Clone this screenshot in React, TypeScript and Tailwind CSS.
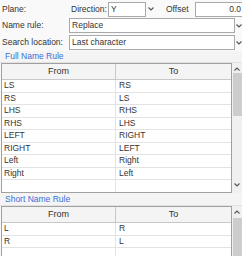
const fullRules = [
  ['LS', 'RS'],
  ['RS', 'LS'],
  ['LHS', 'RHS'],
  ['RHS', 'LHS'],
  ['LEFT', 'RIGHT'],
  ['RIGHT', 'LEFT'],
  ['Left', 'Right'],
  ['Right', 'Left'],
  ['', ''],
];

const shortRules = [
  ['L', 'R'],
  ['R', 'L'],
  ['', ''],
];

function Chevron({ up = false }: { up?: boolean }) {
  return (
    <svg width="6" height="4" viewBox="0 0 6 4" className="block">
      <path
        d={up ? 'M0.5 3.5 L3 1 L5.5 3.5' : 'M0.5 0.5 L3 3 L5.5 0.5'}
        fill="none"
        stroke="#555"
        strokeWidth="1.1"
      />
    </svg>
  );
}

function ScrollBar({ thumbTop, thumbHeight, showDown }: { thumbTop: number; thumbHeight: number; showDown: boolean }) {
  return (
    <div className="relative w-[10px] shrink-0 bg-[#f0f0f0] self-stretch">
      <div className="h-[12px] flex items-center justify-center">
        <Chevron up />
      </div>
      <div
        className="absolute left-[1px] right-0 bg-[#cdcdcd]"
        style={{ top: thumbTop, height: thumbHeight }}
      />
      {showDown && (
        <div className="absolute bottom-[3px] left-0 right-0 h-[10px] flex items-center justify-center">
          <Chevron />
        </div>
      )}
    </div>
  );
}

function RuleTable({ rows, height, thumbTop, thumbHeight, showDown }: { rows: string[][]; height: number; thumbTop: number; thumbHeight: number; showDown: boolean }) {
  return (
    <div className="flex pl-[1px]" style={{ height }}>
      <div className="w-[231px] border border-[#a0a0a0] bg-white overflow-hidden">
        <div className="flex h-[16px] bg-[#f4f4f4] border-b border-[#c8c8c8] text-[9px]">
          <div className="w-[114px] border-r border-[#c8c8c8] flex items-center justify-center">From</div>
          <div className="flex-1 flex items-center justify-center">To</div>
        </div>
        {rows.map((r, i) => (
          <div key={i} className="flex h-[12.5px] border-b border-[#e3e3e3]">
            <div className="w-[114px] border-r border-[#e3e3e3] pl-[2px] flex items-center">{r[0]}</div>
            <div className="flex-1 pl-[3px] flex items-center">{r[1]}</div>
          </div>
        ))}
      </div>
      <ScrollBar thumbTop={thumbTop} thumbHeight={thumbHeight} showDown={showDown} />
    </div>
  );
}

function Field({ value, width, right = false }: { value: string; width: string; right?: boolean }) {
  return (
    <div
      className={`h-[15px] border border-[#a9a9a9] bg-white flex items-center px-[2px] ${width} ${right ? 'justify-end border-r-0' : ''}`}
    >
      {value}
    </div>
  );
}

export default function App() {
  return (
    <div
      className="w-[242px] h-[256px] overflow-hidden bg-[#f9f9f9] text-[8.5px] text-[#333]"
      style={{ fontFamily: '"Liberation Sans", Arial, sans-serif' }}
    >
      <div className="flex items-center h-[17px] pt-[1px]">
        <span className="w-[71px] pl-[2px] shrink-0">Plane:</span>
        <span className="w-[37px] shrink-0">Direction:</span>
        <Field value="Y" width="w-[38px] shrink-0" />
        <span className="w-[10px] shrink-0 flex justify-center"><Chevron /></span>
        <span className="w-[39px] shrink-0 pl-[10px]">Offset</span>
        <Field value="0.0" width="w-[47px] shrink-0 pr-[1px]" right />
      </div>
      <div className="flex items-center h-[17px]">
        <span className="w-[70px] pl-[2px]">Name rule:</span>
        <Field value="Replace" width="w-[168px]" />
        <span className="pl-[1px]"><Chevron /></span>
      </div>
      <div className="flex items-center h-[17px]">
        <span className="w-[70px] pl-[2px]">Search location:</span>
        <Field value="Last character" width="w-[168px]" />
        <span className="pl-[1px]"><Chevron /></span>
      </div>
      <div className="h-[12px] pl-[5px] flex items-center text-[#3a6fd8] border-b border-[#e2e2e2] bg-[#f4f4f4]">
        Full Name Rule
      </div>
      <RuleTable rows={fullRules} height={130} thumbTop={10} thumbHeight={43} showDown />
      <div className="h-[13px] pl-[5px] flex items-center text-[#3a6fd8] border-b border-[#e2e2e2] bg-[#f4f4f4]">
        Short Name Rule
      </div>
      <RuleTable rows={shortRules} height={60} thumbTop={12} thumbHeight={48} showDown={false} />
    </div>
  );
}
